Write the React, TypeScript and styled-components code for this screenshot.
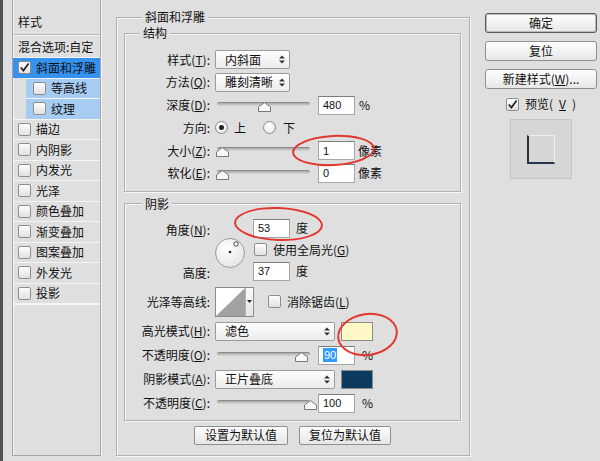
import styled, { createGlobalStyle } from 'styled-components';

const GlobalStyle = createGlobalStyle`
  html, body {
    margin: 0;
    padding: 0;
    background: #dfdfdf;
  }
  body {
    font-family: "Noto Sans CJK SC", "Noto Sans", sans-serif;
    font-size: 12px;
    line-height: 14px;
    color: #111;
  }
  #root {
    width: 600px;
    height: 461px;
    overflow: hidden;
  }
  * {
    box-sizing: border-box;
  }
`;

type SideItem = {
  name: string;
  state?: 'on' | 'sub';
  indent?: boolean;
  checked?: boolean;
};

const sideItems: SideItem[] = [
  { name: '斜面和浮雕', state: 'on', checked: true },
  { name: '等高线', state: 'sub', indent: true },
  { name: '纹理', state: 'sub', indent: true },
  { name: '描边' },
  { name: '内阴影' },
  { name: '内发光' },
  { name: '光泽' },
  { name: '颜色叠加' },
  { name: '渐变叠加' },
  { name: '图案叠加' },
  { name: '外发光' },
  { name: '投影' },
];

function CheckMark() {
  return (
    <svg width="11" height="11" viewBox="0 0 11 11">
      <path d="M1.8 5.6 L4.4 8.6 L9.6 1.6" fill="none" stroke="#1c1c1c" strokeWidth="1.6" />
    </svg>
  );
}

function Arrows() {
  return (
    <svg width="6" height="9" viewBox="0 0 6 9">
      <path d="M0 3.5 L3 0.5 L6 3.5 Z M0 5.5 L3 8.5 L6 5.5 Z" fill="#333" />
    </svg>
  );
}

function Slider({ value }: { value: number }) {
  return (
    <SliderBox>
      <Track />
      <Thumb width="13" height="10" viewBox="0 0 13 10" style={{ left: 5 + value * 88 - 6.5 }}>
        <path d="M0.5 9.5 V5 L6.5 0.6 L12.5 5 V9.5 Z" fill="#f8f8f8" stroke="#787878" />
      </Thumb>
    </SliderBox>
  );
}

export default function App() {
  return (
    <>
      <GlobalStyle />
      <Page>
        <EdgeStrip />

        <Sidebar>
          <SideHeader>样式</SideHeader>
          <SideRow $h={22}>混合选项:自定</SideRow>
          {sideItems.map((item) => (
            <SideRow key={item.name} $state={item.state} $indent={item.indent}>
              <Check>{item.checked && <CheckMark />}</Check>
              {item.name}
            </SideRow>
          ))}
          <SideEnd />
        </Sidebar>

        <Main>
          <Group>
            <Legend $offset={18}>斜面和浮雕</Legend>

            <Group $inner $pad="10px 0 8px">
              <Legend $offset={15}>结构</Legend>
              <Stack $gap={3.8}>
                <Row>
                  <Label>样式(<u>T</u>):</Label>
                  <Select $w={75}>
                    内斜面
                    <Arrows />
                  </Select>
                </Row>
                <Row>
                  <Label>方法(<u>Q</u>):</Label>
                  <Select $w={75}>
                    雕刻清晰
                    <Arrows />
                  </Select>
                </Row>
                <Row>
                  <Label>深度(<u>D</u>):</Label>
                  <Slider value={0.48} />
                  <NumInput>480</NumInput>
                  <Unit>%</Unit>
                </Row>
                <Row>
                  <Label>方向:</Label>
                  <Radio $checked $ml={5} />
                  <Unit $ml={6}>上</Unit>
                  <Radio $ml={17} />
                  <Unit $ml={7}>下</Unit>
                </Row>
                <Row>
                  <Label>大小(<u>Z</u>):</Label>
                  <Slider value={0} />
                  <NumInput>1</NumInput>
                  <Unit $ml={3}>像素</Unit>
                </Row>
                <Row>
                  <Label>软化(<u>E</u>):</Label>
                  <Slider value={0} />
                  <NumInput>0</NumInput>
                  <Unit $ml={3}>像素</Unit>
                </Row>
              </Stack>
            </Group>

            <Group $inner $pad="8px 0 7px" $mt={5}>
              <Legend $offset={17}>阴影</Legend>
              <Stack $gap={5}>
                <AngleGrid>
                  <GridLabel $row="1">角度(<u>N</u>):</GridLabel>
                  <GridCell $row="1">
                    <NumInput $ml={0}>53</NumInput>
                    <Unit $ml={6}>度</Unit>
                  </GridCell>
                  <Dial>
                    <svg width="28" height="28" viewBox="0 0 28 28">
                      <circle cx="14" cy="13" r="1.3" fill="#222" />
                      <circle cx="20" cy="5" r="2.2" fill="#fff" stroke="#333" strokeWidth="0.9" />
                    </svg>
                  </Dial>
                  <GridCell $row="2">
                    <Check $ml={1} />
                    <Unit $ml={6}>使用全局光(<u>G</u>)</Unit>
                  </GridCell>
                  <GridLabel $row="3">高度:</GridLabel>
                  <GridCell $row="3">
                    <NumInput $ml={0}>37</NumInput>
                    <Unit $ml={6}>度</Unit>
                  </GridCell>
                </AngleGrid>

                <Row $h={30} $mt={1}>
                  <Label>光泽等高线:</Label>
                  <Contour>
                    <svg width="29" height="28" viewBox="0 0 29 28">
                      <path d="M0 28 L29 0 L29 28 Z" fill="#a2a2a2" />
                    </svg>
                    <ContourDrop>
                      <svg width="5" height="3" viewBox="0 0 5 3">
                        <path d="M0 0 L5 0 L2.5 3 Z" fill="#222" />
                      </svg>
                    </ContourDrop>
                  </Contour>
                  <Check $ml={14} />
                  <Unit $ml={6}>消除锯齿(<u>L</u>)</Unit>
                </Row>

                <Row>
                  <Label>高光模式(<u>H</u>):</Label>
                  <Select $w={120}>
                    滤色
                    <Arrows />
                  </Select>
                  <Swatch $color="#fff7c6" />
                </Row>
                <Row>
                  <Label>不透明度(<u>O</u>):</Label>
                  <Slider value={0.9} />
                  <NumInput>
                    <Selected>90</Selected>
                  </NumInput>
                  <Unit $ml={7}>%</Unit>
                </Row>
                <Row>
                  <Label>阴影模式(<u>A</u>):</Label>
                  <Select $w={120}>
                    正片叠底
                    <Arrows />
                  </Select>
                  <Swatch $color="#0d3a5f" />
                </Row>
                <Row>
                  <Label>不透明度(<u>C</u>):</Label>
                  <Slider value={1} />
                  <NumInput>100</NumInput>
                  <Unit $ml={7}>%</Unit>
                </Row>
              </Stack>
            </Group>

            <ButtonRow>
              <SmallButton $w={94}>设置为默认值</SmallButton>
              <SmallButton $w={92}>复位为默认值</SmallButton>
            </ButtonRow>
          </Group>
        </Main>

        <Side>
          <DialogButton $primary>确定</DialogButton>
          <DialogButton>复位</DialogButton>
          <DialogButton>
            新建样式(<u>W</u>)...
          </DialogButton>
          <PreviewToggle>
            <Check>
              <CheckMark />
            </Check>
            预览(<u>V</u>)
          </PreviewToggle>
          <PreviewBox>
            <PreviewSquare />
          </PreviewBox>
        </Side>

        <Ring $x={292} $y={135} $w={83} $h={31} $rot={-3} />
        <Ring $x={234} $y={207} $w={89} $h={34} $rot={2} />
        <Ring $x={337} $y={313} $w={61} $h={43} $rot={-8} />
      </Page>
    </>
  );
}

const Page = styled.div`
  position: relative;
  display: flex;
  align-items: flex-start;
  width: 600px;
  height: 461px;
  background: #dfdfdf;
`;

const EdgeStrip = styled.div`
  width: 3px;
  height: 100%;
  flex-shrink: 0;
  background: #525252;
`;

const Sidebar = styled.div`
  margin-left: 9px;
  width: 89px;
  height: 456px;
  flex-shrink: 0;
  border: 1px solid #a7a7a7;
  border-top: none;
  box-shadow: inset 1px 0 0 #f3f3f3, 1px 0 0 #f3f3f3;
`;

const SideHeader = styled.div`
  height: 35px;
  display: flex;
  align-items: flex-end;
  padding: 0 0 5px 5px;
  border-bottom: 1px solid #b7b7b7;
`;

const SideRow = styled.div<{ $state?: 'on' | 'sub'; $indent?: boolean; $h?: number }>`
  height: ${(p) => p.$h ?? 20.5}px;
  display: flex;
  align-items: center;
  gap: 5px;
  margin-left: ${(p) => (p.$indent ? 13 : 0)}px;
  padding-left: ${(p) => (p.$indent ? 7 : 5)}px;
  border-top: 1px solid #f4f4f4;
  background: ${(p) =>
    p.$state === 'on' ? '#3592ee' : p.$state === 'sub' ? '#a6ccf1' : 'transparent'};
`;

const SideEnd = styled.div`
  border-top: 2px solid #f4f4f4;
`;

const Check = styled.span<{ $ml?: number }>`
  width: 13px;
  height: 13px;
  flex-shrink: 0;
  margin-left: ${(p) => p.$ml ?? 0}px;
  display: flex;
  align-items: center;
  justify-content: center;
  border: 1px solid #8d8d8d;
  border-radius: 2px;
  background: linear-gradient(#fdfdfd, #e1e1e1);
`;

const Main = styled.div`
  margin-left: 15px;
  width: 354px;
  flex-shrink: 0;
`;

const Group = styled.fieldset<{ $inner?: boolean; $pad?: string; $mt?: number }>`
  margin: ${(p) => (p.$inner ? `${p.$mt ?? 2}px 0 0` : '10px 0 0')};
  padding: ${(p) => (p.$inner ? p.$pad : '0 8px 0 7px')};
  height: ${(p) => (p.$inner ? 'auto' : '446px')};
  min-width: 0;
  border: 1px solid #b1b1b1;
  box-shadow: 1px 1px 0 #f6f6f6, inset 1px 1px 0 #f6f6f6;
`;

const Legend = styled.legend<{ $offset: number }>`
  margin-left: ${(p) => p.$offset}px;
  padding: 0 3px;
  line-height: 14px;
  background: #dfdfdf;
`;

const Stack = styled.div<{ $gap: number }>`
  display: flex;
  flex-direction: column;
  gap: ${(p) => p.$gap}px;
`;

const Row = styled.div<{ $h?: number; $mt?: number }>`
  display: flex;
  align-items: center;
  height: ${(p) => p.$h ?? 19}px;
  margin-top: ${(p) => p.$mt ?? 0}px;
`;

const Label = styled.span`
  width: 85px;
  flex-shrink: 0;
  text-align: right;
  white-space: nowrap;
`;

const Select = styled.div<{ $w: number }>`
  width: ${(p) => p.$w}px;
  height: 19px;
  margin-left: 5px;
  padding: 0 4px 0 9px;
  display: flex;
  align-items: center;
  justify-content: space-between;
  border: 1px solid #9b9b9b;
  border-radius: 2px;
  background: linear-gradient(#ffffff, #ebebeb);
`;

const SliderBox = styled.div`
  position: relative;
  width: 93px;
  height: 19px;
  margin-left: 7px;
  flex-shrink: 0;
`;

const Track = styled.div`
  position: absolute;
  left: 0;
  right: 0;
  top: 6px;
  height: 4px;
  border-radius: 2px;
  border-top: 1px solid #8a8a8a;
  background: linear-gradient(#a9a9a9, #d9d9d9);
`;

const Thumb = styled.svg`
  position: absolute;
  top: 6px;
`;

const NumInput = styled.div<{ $ml?: number }>`
  width: 37px;
  height: 19px;
  margin-left: ${(p) => p.$ml ?? 8}px;
  padding-left: 4px;
  flex-shrink: 0;
  display: flex;
  align-items: center;
  border: 1px solid #a6a6a6;
  border-top-color: #7c7c7c;
  background: #fff;
  font-family: "Liberation Sans", Arial, sans-serif;
  font-size: 11px;
`;

const Selected = styled.span`
  background: #3399ff;
  color: #fff;
  padding: 0 1px;
`;

const Unit = styled.span<{ $ml?: number }>`
  margin-left: ${(p) => p.$ml ?? 4}px;
  white-space: nowrap;
`;

const Radio = styled.span<{ $checked?: boolean; $ml?: number }>`
  position: relative;
  width: 13px;
  height: 13px;
  margin-left: ${(p) => p.$ml ?? 0}px;
  flex-shrink: 0;
  border: 1px solid #8a8a8a;
  border-radius: 50%;
  background: radial-gradient(circle at 40% 35%, #ffffff, #e2e2e2);

  &::after {
    content: '';
    display: ${(p) => (p.$checked ? 'block' : 'none')};
    position: absolute;
    left: 3px;
    top: 3px;
    width: 5px;
    height: 5px;
    border-radius: 50%;
    background: #222;
  }
`;

const AngleGrid = styled.div`
  display: grid;
  grid-template-columns: 90px 38px 1fr;
  grid-template-rows: 19px 24px 19px;
`;

const GridLabel = styled.span<{ $row: string }>`
  grid-column: 1;
  grid-row: ${(p) => p.$row};
  align-self: end;
  padding-right: 5px;
  text-align: right;
  transform: translateY(-1px);
`;

const GridCell = styled.div<{ $row: string }>`
  grid-column: 3;
  grid-row: ${(p) => p.$row};
  display: flex;
  align-items: center;
`;

const Dial = styled.div`
  grid-column: 2;
  grid-row: 2 / span 2;
  width: 30px;
  height: 30px;
  display: flex;
  align-items: center;
  justify-content: center;
  border: 1px solid #9a9a9a;
  border-radius: 50%;
  background: radial-gradient(circle at 40% 35%, #ffffff, #dedede);
`;

const Contour = styled.div`
  margin-left: 5px;
  height: 30px;
  display: flex;
  border: 1px solid #8c8c8c;
  background: #fff;
`;

const ContourDrop = styled.div`
  width: 8px;
  display: flex;
  align-items: center;
  justify-content: center;
  border-left: 1px solid #b5b5b5;
  background: linear-gradient(#fbfbfb, #e4e4e4);
`;

const Swatch = styled.div<{ $color: string }>`
  width: 32px;
  height: 19px;
  margin-left: 6px;
  border: 1px solid #8a8a8a;
  background: ${(p) => p.$color};
`;

const ButtonRow = styled.div`
  margin-top: 5px;
  display: flex;
  justify-content: center;
  gap: 11px;
`;

const SmallButton = styled.div<{ $w: number }>`
  width: ${(p) => p.$w}px;
  height: 19px;
  display: flex;
  align-items: center;
  justify-content: center;
  border: 1px solid #8f8f8f;
  border-radius: 2px;
  background: linear-gradient(#fdfdfd, #e6e6e6);
`;

const Side = styled.div`
  margin-left: 15px;
  width: 112px;
  padding-top: 13px;
  display: flex;
  flex-direction: column;
  gap: 8px;
`;

const DialogButton = styled.div<{ $primary?: boolean }>`
  height: 20px;
  display: flex;
  align-items: center;
  justify-content: center;
  border: 1px solid ${(p) => (p.$primary ? '#5a5a5a' : '#8f8f8f')};
  border-radius: 3px;
  background: linear-gradient(#fefefe, #e7e7e7);
  box-shadow: ${(p) => (p.$primary ? 'inset 0 0 0 1px #b9b9b9' : 'none')};
`;

const PreviewToggle = styled.div`
  height: 14px;
  display: flex;
  align-items: center;
  justify-content: center;
  gap: 6px;
`;

const PreviewBox = styled.div`
  align-self: center;
  width: 62px;
  height: 60px;
  display: flex;
  align-items: center;
  justify-content: center;
  border: 1px solid #c6c6c6;
  background: #d6d6d6;
`;

const PreviewSquare = styled.div`
  width: 28px;
  height: 29px;
  border-left: 2px solid #24344a;
  border-bottom: 2px solid #24344a;
  border-top: 1px solid #eeeeee;
  border-right: 1px solid #eeeeee;
`;

const Ring = styled.div<{ $x: number; $y: number; $w: number; $h: number; $rot: number }>`
  position: absolute;
  left: ${(p) => p.$x}px;
  top: ${(p) => p.$y}px;
  width: ${(p) => p.$w}px;
  height: ${(p) => p.$h}px;
  border: 2px solid #e2372f;
  border-radius: 50%;
  transform: rotate(${(p) => p.$rot}deg);
  pointer-events: none;
`;
